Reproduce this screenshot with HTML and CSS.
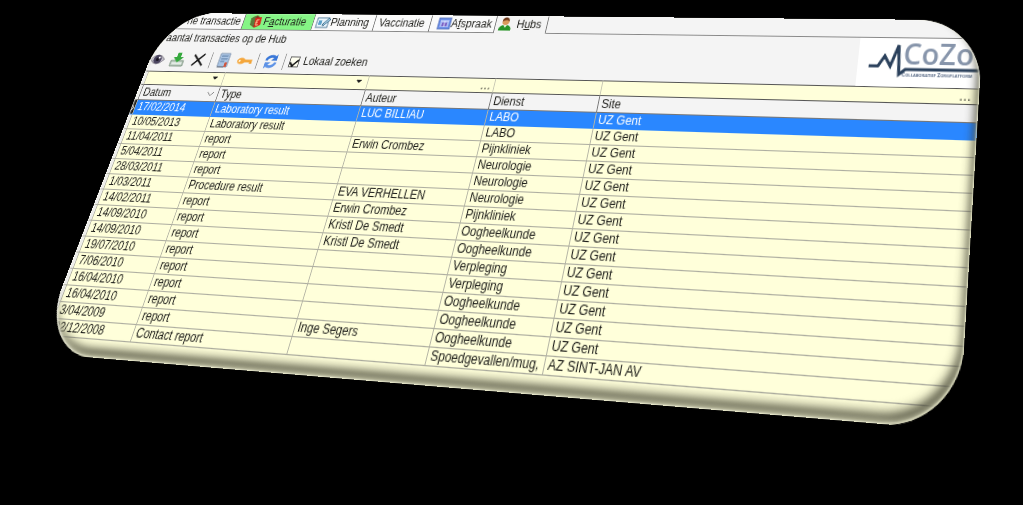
FILE: index.html
```html
<!DOCTYPE html>
<html lang="nl">
<head>
<meta charset="utf-8">
<title>Hubs</title>
<link rel="stylesheet" href="styles.css">
</head>
<body>
<main class="stage">
<section class="panel">
  <div class="tabs" role="tablist">
    <button class="tab tab-first" role="tab">ne transactie</button>
    <button class="tab tab-green" role="tab"><svg class="icon" viewBox="0 0 16 16"><path d="M3 3l5-2 5 3v9l-5 2-5-3z" fill="#7c3b1e"/><path d="M1 4l6-2v11l-5-1z" fill="#5b7a3a"/><path d="M6 4l8-1 1 9-7 3z" fill="#d8261c"/><path d="M12 6h-3v6h3M8 9h3" stroke="#ffd9a0" fill="none"/></svg><span>F<u>a</u>cturatie</span></button>
    <button class="tab tab-plan" role="tab"><svg class="icon icon-wide" viewBox="0 0 18 16"><rect x="1" y="3" width="14" height="11" fill="#e8f4fb" stroke="#4d7795"/><path d="M3 6h4v5H3z" fill="#5aa0c8"/><path d="M8 11l7-8 2 2-7 7z" fill="#9cc6dd" stroke="#356584"/></svg>Planning</button>
    <button class="tab tab-vac" role="tab">Vaccinatie</button>
    <button class="tab tab-afs" role="tab"><svg class="icon" viewBox="0 0 16 16"><rect x="1" y="2" width="14" height="12" fill="#6c8fe8" stroke="#5572bd"/><path d="M3 5h10v7H3z" fill="#a9b8f2"/><path d="M5 7h6v4H5z" fill="#7d62c4"/><path d="M3 5h10M8 5v7" stroke="#dfe6ff"/></svg><span>A<u>f</u>spraak</span></button>
    <button class="tab tab-on" role="tab" aria-selected="true"><svg class="icon" viewBox="0 0 16 16"><path d="M1 15c0-5 3-6 7-6s7 1 7 6z" fill="#279326"/><path d="M6 9l2 3 2-3z" fill="#e9f5df"/><circle cx="8" cy="5" r="4" fill="#d99a5b"/><path d="M4 5c0-6 8-6 8 0-2-2-5-2-8 0z" fill="#6b3517"/></svg><span>H<u>u</u>bs</span></button>
    <span class="tabs-rest"></span>
  </div>
  <div class="head">
    <div class="tools">
      <p class="message">s aantal transacties op de Hub</p>
      <div class="toolbar">
        <button class="tool" aria-label="Bekijken"><svg viewBox="0 0 20 18"><path d="M1 9q9-10 18 0-9 10-18 0z" fill="#c3c0cc" stroke="#77737d"/><circle cx="10" cy="9" r="5" fill="#4b4560"/><circle cx="10" cy="9" r="2" fill="#17131f"/><circle cx="12" cy="7" r="1.300" fill="#fff"/></svg></button>
        <button class="tool" aria-label="Opslaan"><svg viewBox="0 0 20 18"><path d="M2 10h16v6H2z" fill="#c8d6cb" stroke="#708a75"/><path d="M4 13h12" stroke="#fff"/><path d="M8 1h5v5h4l-7 6-6-6h4z" fill="#34a83c"/></svg></button>
        <button class="tool" aria-label="Verwijderen"><svg viewBox="0 0 20 18"><path d="M4 3l13 12M17 2L4 15" stroke="#161616" stroke-width="2" fill="none"/></svg></button>
        <span class="rule"></span>
        <button class="tool" aria-label="Verslag"><svg viewBox="0 0 20 18"><path d="M4 1h12v15H4z" fill="#a9c4e4" stroke="#8194ae"/><path d="M6 4h8M6 7h8M6 10h5" stroke="#55779f"/><path d="M12 11h3v5h-3z" fill="#d0563f"/><path d="M4 16h8" stroke="#5c6470"/></svg></button>
        <button class="tool" aria-label="Sleutel"><svg viewBox="0 0 20 18"><path d="M8 9h10v3" stroke="#f2a437" stroke-width="3" fill="none"/><ellipse cx="6" cy="9" rx="5" ry="3.500" fill="#f5a63b"/><circle cx="4" cy="9" r="1.300" fill="#fff1d2"/></svg></button>
        <span class="rule"></span>
        <button class="tool" aria-label="Vernieuwen"><svg viewBox="0 0 20 18"><path d="M4 8c1-5 8-6 11-3" stroke="#3977d8" stroke-width="3" fill="none"/><path d="M17 1v7h-7z" fill="#3977d8"/><path d="M16 10c-1 5-8 6-11 3" stroke="#5d92e6" stroke-width="3" fill="none"/><path d="M3 17v-7h7z" fill="#5d92e6"/></svg></button>
        <span class="rule"></span>
        <label class="check"><input type="checkbox" checked>Lokaal zoeken</label>
      </div>
    </div>
    <div class="logo">
      <svg class="pulse" viewBox="0 0 122 48" aria-hidden="true"><path d="M11 28h9l6-10 6 10 7-21 2 29 6-5h75" fill="none" stroke="#2b415c" stroke-width="3"/></svg>
      <strong class="brand">CoZo</strong>
      <span class="motto">Collaboratief Zorgplatform</span>
    </div>
  </div>
  <table class="grid">
    <colgroup><col class="c-mark"><col class="c-date"><col class="c-type"><col class="c-author"><col class="c-dept"><col></colgroup>
    <thead>
      <tr class="filters">
        <td></td>
        <td><select aria-label="Filter datum"><option></option></select></td>
        <td><select aria-label="Filter type"><option></option></select></td>
        <td><div class="pick"><input type="text" aria-label="Filter auteur"><button aria-label="Kies auteur">…</button></div></td>
        <td><input type="text" aria-label="Filter dienst"></td>
        <td><div class="pick"><input type="text" aria-label="Filter site"><button class="far" aria-label="Kies site">…</button></div></td>
      </tr>
      <tr class="titles"><th></th><th class="sorted">Datum<svg viewBox="0 0 10 6"><path d="M1 1l4 4 4-4" fill="none" stroke="#777"/></svg></th><th>Type</th><th>Auteur</th><th>Dienst</th><th>Site</th></tr>
    </thead>
    <tbody>
      <tr class="selected"><td>›</td><td>17/02/2014</td><td>Laboratory result</td><td>LUC BILLIAU</td><td>LABO</td><td>UZ Gent</td></tr>
      <tr><td></td><td>10/05/2013</td><td>Laboratory result</td><td></td><td>LABO</td><td>UZ Gent</td></tr>
      <tr><td></td><td>11/04/2011</td><td>report</td><td>Erwin Crombez</td><td>Pijnkliniek</td><td>UZ Gent</td></tr>
      <tr><td></td><td>5/04/2011</td><td>report</td><td></td><td>Neurologie</td><td>UZ Gent</td></tr>
      <tr><td></td><td>28/03/2011</td><td>report</td><td></td><td>Neurologie</td><td>UZ Gent</td></tr>
      <tr><td></td><td>1/03/2011</td><td>Procedure result</td><td>EVA VERHELLEN</td><td>Neurologie</td><td>UZ Gent</td></tr>
      <tr><td></td><td>14/02/2011</td><td>report</td><td>Erwin Crombez</td><td>Pijnkliniek</td><td>UZ Gent</td></tr>
      <tr><td></td><td>14/09/2010</td><td>report</td><td>Kristl De Smedt</td><td>Oogheelkunde</td><td>UZ Gent</td></tr>
      <tr><td></td><td>14/09/2010</td><td>report</td><td>Kristl De Smedt</td><td>Oogheelkunde</td><td>UZ Gent</td></tr>
      <tr><td></td><td>19/07/2010</td><td>report</td><td></td><td>Verpleging</td><td>UZ Gent</td></tr>
      <tr><td></td><td>7/06/2010</td><td>report</td><td></td><td>Verpleging</td><td>UZ Gent</td></tr>
      <tr><td></td><td>16/04/2010</td><td>report</td><td></td><td>Oogheelkunde</td><td>UZ Gent</td></tr>
      <tr><td></td><td>16/04/2010</td><td>report</td><td></td><td>Oogheelkunde</td><td>UZ Gent</td></tr>
      <tr><td></td><td>3/04/2009</td><td>report</td><td>Inge Segers</td><td>Oogheelkunde</td><td>UZ Gent</td></tr>
      <tr><td></td><td>02/12/2008</td><td>Contact report</td><td></td><td>Spoedgevallen/mug,</td><td>AZ SINT-JAN AV</td></tr>
    </tbody>
  </table>
</section>
</main>
</body>
</html>
```
FILE: styles.css
```css
* { box-sizing: border-box; }
body {
  margin: 0;
  background: #000;
  color: #1c1c18;
  font: 12px/15px "Liberation Sans", Arial, sans-serif;
  overflow: hidden;
}
button, input, select { font: inherit; color: inherit; margin: 0; padding: 0; border: 0; background: none; border-radius: 0; }
.stage { padding-right: 102px; min-height: 100vh; }

/* The window is shown as a tilted card in perspective. */
.panel {
  position: relative;
  overflow: hidden;
  padding-bottom: 16px;
  border-radius: 64px;
  background: #ffffda;
  transform-origin: 0 0;
  transform: matrix3d(0.72715, 0.0047311, 0, -0.0001613, -0.3802, 0.8365, 0, -0.00033513, 0, 0, 1, 0, 167.75, 12.934, 0, 1);
}
.panel::after {
  content: "";
  position: absolute;
  inset: 0;
  border-radius: 64px;
  pointer-events: none;
  box-shadow:
    inset -1px -1px 1px rgba(225, 225, 195, .6),
    inset 1px 0 2px rgba(255, 255, 255, .8),
    inset 0 -3px 4px rgba(240, 240, 205, .7),
    inset -4px -9px 9px -1px rgba(58, 58, 42, .85);
}

.tabs { display: flex; height: 19px; background: #f4f4f4; }
.tab {
  display: flex;
  align-items: center;
  flex: none;
  gap: 2px;
  height: 19px;
  padding: 0 3px;
  border-right: 1px solid #777;
  border-bottom: 1px solid #888;
  background: #fafafa;
  white-space: nowrap;
}
.tab-first { width: 103px; justify-content: flex-end; }
.tab-green { width: 88px; padding-left: 7px; background: #85f585; }
.tab-plan { width: 75px; gap: 0; }
.tab-vac { width: 67px; padding-left: 5px; }
.tab-afs { width: 76px; padding-left: 8px; gap: 0; }
.tab-on { width: 59px; gap: 5px; border-bottom-color: #f4f4f4; background: #f4f4f4; }
.tabs-rest { flex: 1; border-bottom: 1px solid #888; }
.icon { width: 16px; height: 16px; flex: none; }
.icon-wide { width: 18px; }

.head { display: flex; height: 48px; background: #f4f4f4; }
.tools { flex: 1; }
.message { margin: 0; padding: 3px 0 3px 2px; }
.toolbar { display: flex; align-items: center; height: 27px; gap: 6px; }
.tool { width: 20px; height: 18px; }
.tool svg { display: block; width: 20px; height: 18px; }
.rule { width: 1px; height: 18px; background: #999; }
.check { display: flex; align-items: center; gap: 5px; }
.check input {
  appearance: none;
  width: 12px;
  height: 12px;
  border: 1px solid #555;
  background: #fffff0;
  display: grid;
  place-items: center;
}
.check input:checked::before {
  content: "";
  width: 8px;
  height: 4px;
  border: solid #111;
  border-width: 0 0 2px 2px;
  transform: rotate(-45deg);
}

.logo { display: grid; width: 119px; background: #fff; align-content: start; padding: 1px 0 0 44px; position: relative; overflow: hidden; }
.pulse { position: absolute; inset: 0; width: 122px; height: 48px; }
.brand { font: 600 28px/28px "Open Sans", sans-serif; color: #8795ab; }
.motto { font: bold 5px/8px "Open Sans", sans-serif; font-variant: small-caps; color: #5d6f8a; white-space: nowrap; padding-top: 3px; }

.grid { width: 100%; table-layout: fixed; border-collapse: separate; border-spacing: 0; }
.c-mark { width: 5px; }
.c-date { width: 98px; }
.c-type { width: 176px; }
.c-author { width: 146px; }
.c-dept { width: 118px; }
.grid td, .grid th {
  height: 16px;
  padding: 0 0 0 3px;
  border-right: 1px solid #b5b5a5;
  border-bottom: 1px solid #adada0;
  text-align: left;
  font-weight: normal;
  line-height: 15px;
  white-space: nowrap;
}
.grid td:last-child, .grid th:last-child { border-right: 0; }
.grid tr > :first-child { padding: 0; background: #f3f3f3; }
.grid .filters td { border-top: 1px solid #555; border-bottom-color: #555; border-right-color: #c8c8b4; padding: 0; }
.grid .titles th { height: 17px; line-height: 16px; background: #f4f4f4; border-color: #777; }
.sorted svg { float: right; width: 10px; height: 6px; margin: 5px 4px 0 0; }
.grid .selected td { background: #2a87ff; color: #fff; border-bottom-color: #2a87ff; }
.grid .selected td:first-child { background: #111; line-height: 14px; }
.filters select {
  display: block;
  appearance: none;
  width: 100%;
  height: 14px;
  background: linear-gradient(to bottom right, #222 50%, transparent 50%) right 7px top 4px / 3px 4px no-repeat,
    linear-gradient(to bottom left, #222 50%, transparent 50%) right 10px top 4px / 3px 4px no-repeat;
}
.filters input { display: block; width: 100%; height: 14px; }
.pick { display: flex; }
.pick button { flex: none; width: 18px; height: 14px; line-height: 10px; }
.pick .far { width: 26px; }
```
